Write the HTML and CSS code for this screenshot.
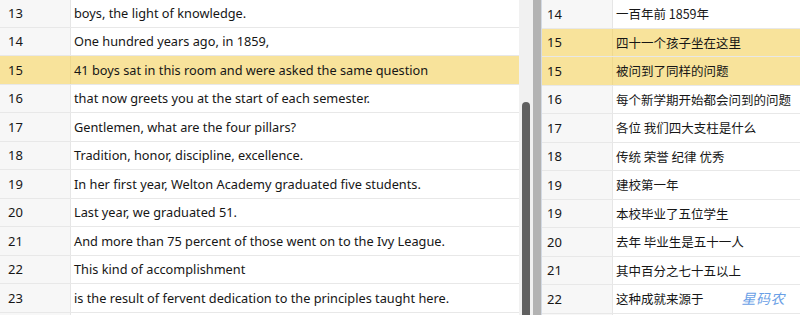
FILE: index.html
```html
<!DOCTYPE html>
<html>
<head>
<meta charset="utf-8">
<link rel="stylesheet" href="styles.css">
</head>
<body>
<div class="app">
  <div class="pane left">
    <div class="list list-left">
      <div class="row"><div class="num">13</div><div class="txt">boys, the light of knowledge.</div></div>
      <div class="row"><div class="num">14</div><div class="txt">One hundred years ago, in 1859,</div></div>
      <div class="row hl"><div class="num">15</div><div class="txt">41 boys sat in this room and were asked the same question</div></div>
      <div class="row"><div class="num">16</div><div class="txt">that now greets you at the start of each semester.</div></div>
      <div class="row"><div class="num">17</div><div class="txt">Gentlemen, what are the four pillars?</div></div>
      <div class="row"><div class="num">18</div><div class="txt">Tradition, honor, discipline, excellence.</div></div>
      <div class="row"><div class="num">19</div><div class="txt">In her first year, Welton Academy graduated five students.</div></div>
      <div class="row"><div class="num">20</div><div class="txt">Last year, we graduated 51.</div></div>
      <div class="row"><div class="num">21</div><div class="txt">And more than 75 percent of those went on to the Ivy League.</div></div>
      <div class="row"><div class="num">22</div><div class="txt">This kind of accomplishment</div></div>
      <div class="row"><div class="num">23</div><div class="txt">is the result of fervent dedication to the principles taught here.</div></div>
      <div class="row"><div class="num"></div><div class="txt"></div></div>
    </div>
  </div>
  <div class="track"><div class="thumb"></div></div>
  <div class="divider"></div>
  <div class="pane right">
    <div class="list list-right">
      <div class="row"><div class="num">14</div><div class="txt cjk">一百年前 1859年</div></div>
      <div class="row hl"><div class="num">15</div><div class="txt cjk">四十一个孩子坐在这里</div></div>
      <div class="row hl"><div class="num">15</div><div class="txt cjk">被问到了同样的问题</div></div>
      <div class="row"><div class="num">16</div><div class="txt cjk">每个新学期开始都会问到的问题</div></div>
      <div class="row"><div class="num">17</div><div class="txt cjk">各位 我们四大支柱是什么</div></div>
      <div class="row"><div class="num">18</div><div class="txt cjk">传统 荣誉 纪律 优秀</div></div>
      <div class="row"><div class="num">19</div><div class="txt cjk">建校第一年</div></div>
      <div class="row"><div class="num">19</div><div class="txt cjk">本校毕业了五位学生</div></div>
      <div class="row"><div class="num">20</div><div class="txt cjk">去年 毕业生是五十一人</div></div>
      <div class="row"><div class="num">21</div><div class="txt cjk">其中百分之七十五以上</div></div>
      <div class="row"><div class="num">22</div><div class="txt cjk">这种成就来源于</div></div>
      <div class="row"><div class="num"></div><div class="txt cjk"></div></div>
    </div>
    <div class="watermark">星码农</div>
  </div>
</div>
</body>
</html>
```
FILE: styles.css
```css
html, body {
  margin: 0;
  padding: 0;
  width: 800px;
  height: 315px;
  overflow: hidden;
  background: #ffffff;
}
.app {
  display: flex;
  width: 800px;
  height: 315px;
  font-family: "Noto Sans", "Noto Sans CJK SC", sans-serif;
  font-size: 12.75px;
  color: #161616;
}
.pane {
  overflow: hidden;
  position: relative;
}
.left {
  width: 519px;
  flex: none;
}
.right {
  flex: 1;
  border-left: 1px solid #d3dae4;
}
.list {
  display: flex;
  flex-direction: column;
}
.list-left {
  margin-top: -1px;
}
.row {
  display: flex;
  height: 28.5px;
  box-sizing: border-box;
  border-bottom: 1px solid #e8e8e8;
  align-items: stretch;
  flex: none;
}
.num {
  width: 71px;
  flex: none;
  box-sizing: border-box;
  padding-left: 8px;
  display: flex;
  align-items: center;
  background: #f7f7f7;
  border-right: 1px solid #e6e6e6;
  font-size: 13px;
}
.right .num {
  width: 71px;
  padding-left: 5px;
}
.txt {
  flex: 1;
  display: flex;
  align-items: center;
  padding-left: 3px;
  white-space: nowrap;
  overflow: hidden;
}
.cjk {
  font-family: "Noto Sans CJK SC", sans-serif;
  font-size: 12.5px;
}
.hl .num, .hl .txt {
  background: #f8e39b;
}
.hl .num {
  border-right-color: #eed98f;
}
.track {
  width: 14px;
  flex: none;
  background: #f1f1f1;
  display: flex;
  flex-direction: column;
  align-items: center;
  padding-top: 102px;
  box-sizing: border-box;
}
.thumb {
  width: 8px;
  flex: 1;
  background: #606060;
  border-radius: 4px 4px 0 0;
}
.divider {
  width: 8px;
  flex: none;
  background: #b3b3b3;
}
.watermark {
  position: absolute;
  right: 15px;
  bottom: 7px;
  font-family: "Noto Sans CJK SC", sans-serif;
  font-size: 14px;
  font-style: italic;
  color: #6aa0e6;
  letter-spacing: 0.5px;
}
```
